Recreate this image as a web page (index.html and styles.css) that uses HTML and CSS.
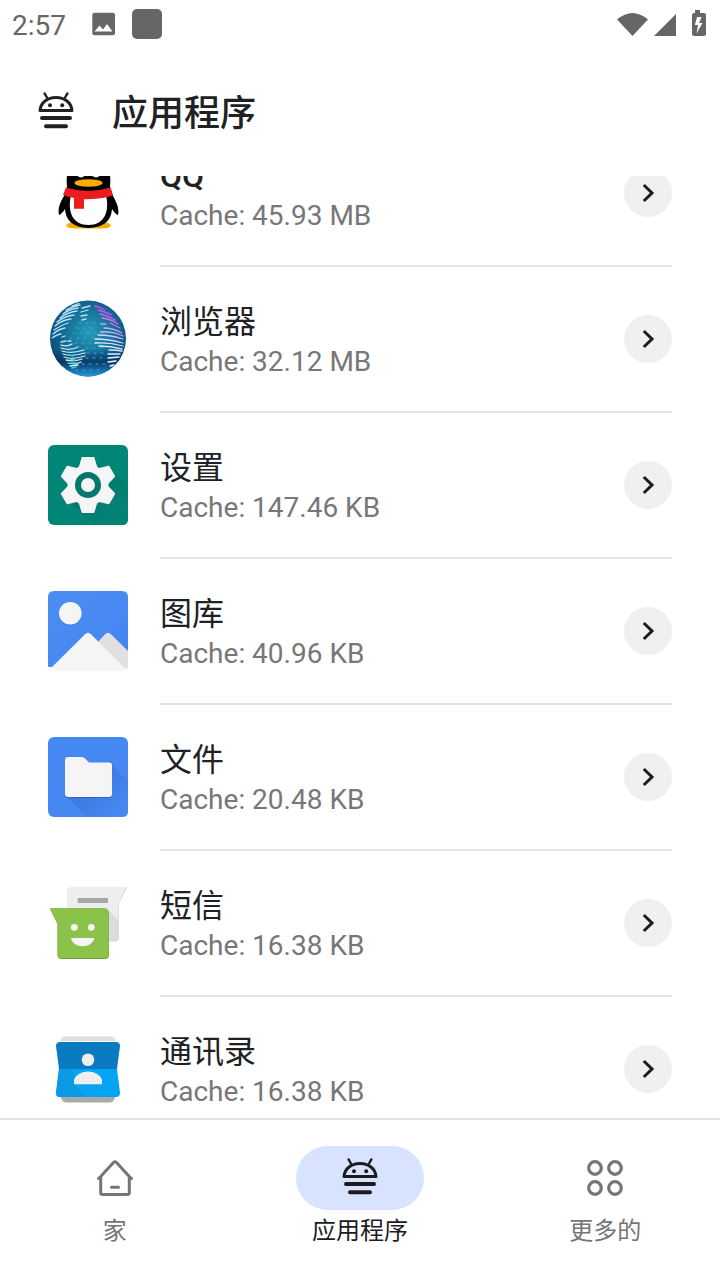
FILE: index.html
```html
<!DOCTYPE html>
<html lang="zh-CN">
<head>
<meta charset="utf-8">
<meta name="viewport" content="width=device-width, initial-scale=1">
<title>应用程序</title>
<link rel="stylesheet" href="styles.css">
</head>
<body>
<svg class="defs" aria-hidden="true">
  <symbol id="droid" viewBox="0 2 48 48">
    <g fill="none" stroke="currentColor" stroke-linecap="round" stroke-linejoin="round">
      <path stroke-width="2.4" d="M12.6 7.4l2.6 4.6M35.4 7.4l-2.6 4.6"/>
      <path stroke-width="3" d="M8 24.5C8.6 16.5 15.500 11.500 24 11.500S39.400 16.500 40 24.500Z"/>
      <path stroke-width="4" d="M10 32h28M14 40.200h20"/>
    </g>
    <circle cx="18" cy="19.200" r="2" fill="currentColor"/><circle cx="30.200" cy="19.200" r="2" fill="currentColor"/>
  </symbol>
  <symbol id="chevron" viewBox="0 0 48 48">
    <path d="M19.800 16l8.200 8-8.200 8" fill="none" stroke="#1c1b1f" stroke-width="3"/>
  </symbol>
</svg>

<div class="status">
  <span class="clock">2:57</span>
  <svg class="status-photo" viewBox="0 0 24 24"><rect x=".3" y=".8" width="22.700" height="22.400" rx="2.500" fill="#666"/><path d="M2.500 19.500l5-6 3.500 4 4-5.500 5.500 7.500z" fill="#fff"/></svg>
  <span class="status-block"></span>
  <svg class="status-radio" viewBox="0 0 96 32"><g fill="#666"><path d="M1 11.500Q16.500-1.500 32 11.500L16.500 28z"/><path d="M38 28L60 6v22z"/><path d="M79 2h5v3h4q2 0 2 2v19q0 2-2 2H78q-2 0-2-2V7q0-2 2-2h1z"/></g><path d="M84 9h-3l-2.200 8h3.200l-1.500 8.500 6-10.500h-3.300l2.300-6z" fill="#fff"/></svg>
</div>

<header class="header">
  <svg class="glyph"><use href="#droid"/></svg>
  <h1 class="title">应用程序</h1>
</header>

<main class="viewport">
  <ul class="list">
    <li class="row">
      <svg class="app" viewBox="0 0 80 80">
        <path d="M18 72q6-6 22.500-2.500Q57 66 63 72q0 3.500-11 3.500H29Q18 75.500 18 72z" fill="#faab07"/>
        <path d="M19 34C17 12 25 4 40.500 4S64 12 62 34l3 9q7 12 5 19-3-1-6-6-1 18-23.500 19Q18 74 17 56q-3 5-6 6-2-8 5-19z" fill="#000"/>
        <path d="M23 42q17 5 35 0c4 17-2 30-17.500 30S19 59 23 42z" fill="#fff"/>
        <ellipse cx="33" cy="16.500" rx="6" ry="8" fill="#fff"/><ellipse cx="48" cy="16.500" rx="6" ry="8" fill="#fff"/>
        <ellipse cx="40.500" cy="30" rx="14" ry="3.800" fill="#faab07"/>
        <path d="M18 34.500q22 7 44.500 0l2.500 8q-12 4-29 3.800v9.400H26V45q-6-1-11-3z" fill="#ea1c1d"/>
      </svg>
      <div class="info"><h2 class="name latin">QQ</h2><p class="cache">Cache: 45.93 MB</p></div>
      <button class="open" aria-label="QQ"><svg><use href="#chevron"/></svg></button>
    </li>
    <li class="row">
      <svg class="app" viewBox="0 0 80 80">
        <defs>
          <radialGradient id="sea" cx=".52" cy=".42" r=".58"><stop offset="0" stop-color="#279bbb"/><stop offset=".55" stop-color="#156f98"/><stop offset="1" stop-color="#0b4779"/></radialGradient>
          <linearGradient id="glow" x1="0" y1="0" x2="0" y2="1"><stop offset=".65" stop-color="#082f60" stop-opacity="0"/><stop offset=".81" stop-color="#083464" stop-opacity=".85"/><stop offset="1" stop-color="#249fe0"/></linearGradient>
          <linearGradient id="beam" gradientUnits="userSpaceOnUse" x1="52" y1="52" x2="74" y2="20"><stop offset="0" stop-color="#eef8ff"/><stop offset=".5" stop-color="#c4cdfa"/><stop offset="1" stop-color="#d52df2"/></linearGradient>
        </defs>
        <circle cx="40" cy="39.500" r="38" fill="url(#sea)"/><circle cx="40" cy="39.500" r="38" fill="url(#glow)"/>
        <g fill="none" stroke-linecap="round" stroke-width="1.300">
          <path stroke="#b8e1f4" d="M24 7l7-2.500M18 11q7-4 14-5M15 15q6-5 15-6M12 19q8-6 17-7M9 23q8-6 17-7M7 27q7-6 16-7M6 31q7-5 14-7M5 35q6-5 12-6M4 39q6-4 9-4M34 9l8-2M33 13l7-2M33 17l6-1M34 21l4-1M14 38l3-1M13 43l5-1M20 42l3 0"/>
          <path stroke="#caedf8" d="M13 46q6 2 11-1M13 49q9 3 17-1M14 52q9 3 22-1M15 55q8 3 22-1M16 58q8 3 21-1M18 61q8 2 16-1M20 64q7 2 13-1M22 67l8-1"/>
          <path stroke="#37d4d6" d="M21 56l4 1M22 60l5 1M23 64l5 0M24 69l4-1"/>
          <path stroke="url(#beam)" d="M47 7q5 1 10 4M50 11q8 2 14 5M52 15q9 2 15 6M54 19q9 1 16 6M62 24l10 5M53 25l5 0M56 29q9 0 18 5M53 33q12-1 22 4M50 36q13 0 25 4M47 40q14 0 28 4M47 44q14-1 28 3M51 47q12 0 23 3M61 51q8 0 13 1M60 55q7 0 12 0M60 59l11-1M60 63l8-1M62 67l4-1"/>
          <path stroke="#46a7c9" stroke-width="1" stroke-dasharray="2 5" d="M31 24h25M28 29h21M25 34h25M22 39h24M27 44h20M38 49h20M39 54h20M38 59h22M34 65h25M28 71h27"/>
        </g>
      </svg>
      <div class="info"><h2 class="name">浏览器</h2><p class="cache">Cache: 32.12 MB</p></div>
      <button class="open" aria-label="浏览器"><svg><use href="#chevron"/></svg></button>
    </li>
    <li class="row">
      <svg class="app" viewBox="0 0 80 80">
        <defs><linearGradient id="gearshade" x1=".2" y1=".2" x2=".9" y2=".9"><stop offset="0" stop-color="#04756a"/><stop offset="1" stop-color="#018577"/></linearGradient></defs>
        <rect width="80" height="80" rx="6" fill="#018577"/>
        <path d="M63 24l17 17v33q0 6-6 6H47L20 56z" fill="url(#gearshade)"/>
        <g fill="#f5f5f5" stroke="#f5f5f5" stroke-width="2" stroke-linejoin="round">
          <circle cx="40" cy="40" r="19.500"/>
          <path id="tooth" d="M31.500 23l3-10h11l3 10z"/>
          <use href="#tooth" transform="rotate(60 40 40)"/><use href="#tooth" transform="rotate(120 40 40)"/><use href="#tooth" transform="rotate(180 40 40)"/><use href="#tooth" transform="rotate(240 40 40)"/><use href="#tooth" transform="rotate(300 40 40)"/>
        </g>
        <circle cx="40" cy="40" r="10" fill="#f5f5f5" stroke="#04786d" stroke-width="6"/>
      </svg>
      <div class="info"><h2 class="name">设置</h2><p class="cache">Cache: 147.46 KB</p></div>
      <button class="open" aria-label="设置"><svg><use href="#chevron"/></svg></button>
    </li>
    <li class="row">
      <svg class="app" viewBox="0 0 80 80">
        <defs><linearGradient id="sky" x1="0" y1="0" x2="1" y2="1"><stop offset="0" stop-color="#4c8df1"/><stop offset="1" stop-color="#4384f3"/></linearGradient></defs>
        <path d="M6 0h68q6 0 6 6v70H0V6q0-6 6-6z" fill="url(#sky)"/>
        <circle cx="22.300" cy="24" r="11" fill="#3b7ce0" opacity=".6"/><circle cx="22.300" cy="22.300" r="11.300" fill="#f5f5f5"/>
        <path d="M50 51l7-7.800q3-3 6 0L80 60v18H50z" fill="#e0e0e0"/>
        <path d="M0 75l2 3L37 43.200q3-3 6 0L78 78l2-3q0 5-6 5H6q-6 0-6-5z" fill="#f5f5f5"/>
      </svg>
      <div class="info"><h2 class="name">图库</h2><p class="cache">Cache: 40.96 KB</p></div>
      <button class="open" aria-label="图库"><svg><use href="#chevron"/></svg></button>
    </li>
    <li class="row">
      <svg class="app" viewBox="0 0 80 80">
        <defs><linearGradient id="foldshade" x1=".2" y1=".2" x2=".85" y2=".85"><stop offset="0" stop-color="#3873d8"/><stop offset="1" stop-color="#4688f1"/></linearGradient></defs>
        <rect width="80" height="80" rx="6" fill="#4688f1"/>
        <path d="M62 26l18 18v30q0 6-6 6H39L18 59z" fill="url(#foldshade)"/>
        <path d="M17 24q0-3 3-3h14q2 0 3 1.500l4 4h20q3 0 3 3V58q0 3-3 3H20q-3 0-3-3z" fill="#3165bf"/>
        <path d="M17 23q0-3 3-3h14q2 0 3 1.500l4 4h20q3 0 3 3V57q0 3-3 3H20q-3 0-3-3z" fill="#f5f5f5"/>
      </svg>
      <div class="info"><h2 class="name">文件</h2><p class="cache">Cache: 20.48 KB</p></div>
      <button class="open" aria-label="文件"><svg><use href="#chevron"/></svg></button>
    </li>
    <li class="row">
      <svg class="app" viewBox="0 0 80 80">
        <path d="M23 4.700h56l-8 15.500V54q0 4.500-4 4.500H23q-4 0-4-4V8.700q0-4 4-4z" fill="#cfcfcf"/>
        <path d="M23 4h55.500L70.500 20v33.500q0 4-4 4H23q-4 0-4-4V8q0-4 4-4z" fill="#eee"/>
        <path d="M59 26l11.500 11.500v16q0 4-4 4H59z" fill="#dcdcdc"/>
        <path d="M29.700 15H60v5H29.700z" fill="#a7a7a7"/>
        <path d="M2 26h54q5 0 5 5v41q0 4-4 4H13.500q-4 0-4-4V41z" fill="#739f43"/>
        <path d="M2 25h54q4.700 0 4.700 4.700V71q0 4-4 4H13.500q-4 0-4-4V40z" fill="#8bc34a"/>
        <circle cx="26.300" cy="44.300" r="3.400" fill="#f5f5f5"/><circle cx="43.300" cy="44.300" r="3.400" fill="#f5f5f5"/>
        <path d="M23 55h23.300c-2 11-21.300 11-23.300 0z" fill="#f5f5f5"/>
      </svg>
      <div class="info"><h2 class="name">短信</h2><p class="cache">Cache: 16.38 KB</p></div>
      <button class="open" aria-label="短信"><svg><use href="#chevron"/></svg></button>
    </li>
    <li class="row">
      <svg class="app" viewBox="0 0 80 80">
        <path d="M12 12q2-4.700 6-4.700h44q4 0 6 4.700z" fill="#e0e0e0"/>
        <path d="M12 66h56q-2 7.500-6 7.500H18q-4 0-6-7.500z" fill="#aaa"/>
        <path d="M12 13h56q4 0 4 4l-3 23H11L8 17q0-4 4-4z" fill="#0b7bc1"/>
        <path d="M11 40h58l3 24q0 4-4 4H12q-4 0-4-4z" fill="#06a5f3"/>
        <path d="M11 40h15v15l13 13H12q-4 0-4-4z" fill="#0b9be5"/>
        <circle cx="40" cy="30.700" r="6.300" fill="#eee"/>
        <path d="M26 55.300V51c4-11.500 24-11.500 28 0v4.300z" fill="#eee"/>
      </svg>
      <div class="info"><h2 class="name">通讯录</h2><p class="cache">Cache: 16.38 KB</p></div>
      <button class="open" aria-label="通讯录"><svg><use href="#chevron"/></svg></button>
    </li>
  </ul>
</main>

<nav class="nav">
  <a class="tab" href="#home">
    <span class="pill"><svg class="glyph" viewBox="0 0 48 48"><g fill="none" stroke="currentColor" stroke-width="3" stroke-linejoin="round" stroke-linecap="round"><path d="M7.500 24.500L9.700 22.500 22.500 8.500q1.500-1.500 3 0L38.300 22.500l2.200 2M9.700 22.500V38.500q0 2 2 2h24.600q2 0 2-2V22.500M20.500 33.300h7"/></g></svg></span>
    <span class="label">家</span>
  </a>
  <a class="tab active" href="#apps" aria-current="page">
    <span class="pill"><svg class="glyph"><use href="#droid"/></svg></span>
    <span class="label">应用程序</span>
  </a>
  <a class="tab" href="#more">
    <span class="pill"><svg class="glyph" viewBox="0 0 48 48"><g fill="none" stroke="currentColor" stroke-width="3.200"><circle cx="14" cy="14" r="6.300"/><circle cx="34" cy="14" r="6.300"/><circle cx="14" cy="34" r="6.300"/><circle cx="34" cy="34" r="6.300"/></g></svg></span>
    <span class="label">更多的</span>
  </a>
</nav>
</body>
</html>
```

FILE: styles.css
```css
* { box-sizing: border-box; }

body {
  margin: 0;
  height: 100vh;
  display: flex;
  flex-direction: column;
  background: #fff;
  color: #202124;
  font-family: Roboto, "Noto Sans CJK SC", sans-serif;
}

h1, h2, p, ul { margin: 0; padding: 0; }
svg { display: block; flex: none; }
.defs { position: absolute; width: 0; height: 0; }

.status {
  display: flex;
  align-items: center;
  height: 48px;
  flex: none;
  padding: 0 8px 0 12px;
  color: #666;
}
.clock { font-size: 28px; line-height: 32px; padding-top: 4px; }
.status-photo { width: 24px; height: 24px; margin-left: 26px; }
.status-block { width: 30px; height: 30px; margin-left: 16px; border-radius: 5px; background: #666; }
.status-radio { width: 96px; height: 32px; margin-left: auto; }

.header {
  display: flex;
  align-items: center;
  gap: 32px;
  height: 128px;
  flex: none;
  padding: 0 32px;
}
.glyph { width: 48px; height: 48px; }
.title { padding-top: 4px; font-size: 36px; line-height: 48px; font-weight: 500; }

.viewport { flex: 1; min-height: 0; overflow: hidden; }
/* The list is shown partly scrolled under the header. */
.list { list-style: none; margin-top: -55px; padding: 0 48px; }
.row {
  display: grid;
  grid-template-columns: 80px 1fr 48px;
  grid-template-rows: 144px 2px;
  column-gap: 32px;
  align-items: center;
}
.row::after {
  content: "";
  grid-column: 2 / 4;
  height: 2px;
  background: #e1e1e6;
}
.app { width: 80px; height: 80px; }
.info { padding-top: 5px; }
.name { font-size: 32px; line-height: 40px; font-weight: 400; }
.latin { font-weight: 500; }
.cache { font-size: 28px; line-height: 40px; color: #777; }
.open {
  width: 48px;
  height: 48px;
  padding: 0;
  border: 0;
  border-radius: 50%;
  background: #f0f0f0;
}
.open svg { width: 48px; height: 48px; }

.nav {
  display: grid;
  grid-template-columns: repeat(3, 1fr);
  gap: 16px;
  flex: none;
  padding: 26px 0 32px;
  border-top: 2px solid #e1e1e6;
}
.tab {
  display: flex;
  flex-direction: column;
  align-items: center;
  gap: 4px;
  color: #757575;
  text-decoration: none;
}
.pill {
  display: flex;
  align-items: center;
  justify-content: center;
  width: 128px;
  height: 64px;
  border-radius: 32px;
}
.label { font-size: 24px; line-height: 34px; }
.active { color: #1c1b1f; }
.active .pill { background: #d7e3ff; }
```
